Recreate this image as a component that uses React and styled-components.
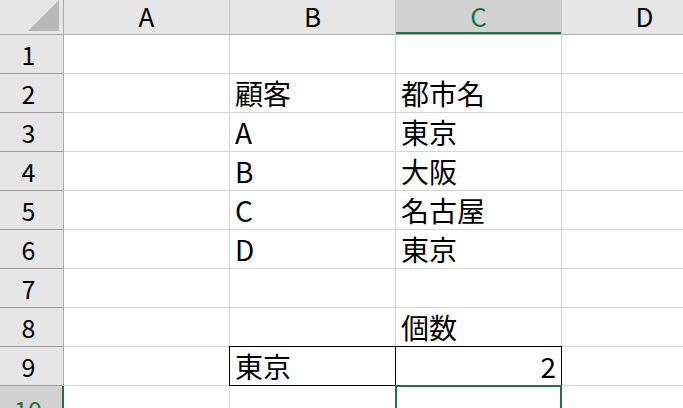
import React from "react";
import styled, { createGlobalStyle, css } from "styled-components";

const GREEN = "#217346";
const GRID = "#d4d4d4";
const HEAD_LINE = "#ababab";
const HEAD_BG = "#e6e6e6";
const HEAD_SEL = "#d2d2d2";
const FONT = `"Noto Sans CJK JP", "Noto Sans", sans-serif`;

const Global = createGlobalStyle`
  html, body { margin: 0; padding: 0; background: #fff; overflow: hidden; }
  body { font-family: ${FONT}; }
`;

const Sheet = styled.div`
  display: grid;
  grid-template-columns: 64px repeat(4, 166px);
  grid-template-rows: 35px repeat(10, 39px);
  width: 683px;
  height: 408px;
  overflow: hidden;
  font-family: ${FONT};
`;

const Corner = styled.div`
  position: relative;
  background: ${HEAD_BG};
  border-right: 1px solid ${HEAD_LINE};
  border-bottom: 1px solid ${HEAD_LINE};
  box-sizing: border-box;
  &::after {
    content: "";
    position: absolute;
    right: 4px;
    bottom: 3px;
    width: 31px;
    height: 31px;
    background: #b8b8b8;
    clip-path: polygon(100% 0, 100% 100%, 0 100%);
  }
`;

const ColHead = styled.div`
  box-sizing: border-box;
  display: flex;
  align-items: center;
  justify-content: center;
  padding-bottom: 2px;
  background: ${(p) => (p.$sel ? HEAD_SEL : HEAD_BG)};
  color: ${(p) => (p.$sel ? GREEN : "#000")};
  border-right: 1px solid #c8c8c8;
  border-bottom: 1px solid ${HEAD_LINE};
  font-size: 26px;
  line-height: 30px;
  ${(p) =>
    p.$sel &&
    css`
      box-shadow: inset 0 -2px 0 ${GREEN};
    `}
`;

const RowHead = styled.div`
  box-sizing: border-box;
  display: flex;
  align-items: center;
  justify-content: center;
  padding-right: 6px;
  background: ${(p) => (p.$sel ? HEAD_SEL : HEAD_BG)};
  color: ${(p) => (p.$sel ? GREEN : "#000")};
  border-right: 1px solid ${HEAD_LINE};
  border-bottom: 1px solid #9e9e9e;
  font-size: 25px;
  line-height: 38px;
  ${(p) =>
    p.$sel &&
    css`
      border-right: 2px solid ${GREEN};
      align-items: flex-start;
      padding-top: 4px;
    `}
`;

const Cell = styled.div`
  position: relative;
  box-sizing: border-box;
  display: flex;
  align-items: flex-end;
  justify-content: ${(p) => (p.$right ? "flex-end" : "flex-start")};
  padding: 0 5px 0 5px;
  border-right: 1px solid ${GRID};
  border-bottom: 1px solid ${GRID};
  font-size: 28px;
  line-height: 38px;
  color: #000;
  white-space: nowrap;
  ${(p) =>
    p.$boxed &&
    css`
      border-right-color: #000;
      border-bottom-color: #000;
      box-shadow: 0 -1px 0 #000, -1px 0 0 #000, -1px -1px 0 #000;
    `}
  ${(p) =>
    p.$active &&
    css`
      &::after {
        content: "";
        position: absolute;
        left: -1px;
        top: -1px;
        right: -1px;
        bottom: -1px;
        border: 2px solid ${GREEN};
        pointer-events: none;
      }
    `}
`;

const COLS = ["A", "B", "C", "D"];
const DATA = {
  2: { B: "顧客", C: "都市名" },
  3: { B: "A", C: "東京" },
  4: { B: "B", C: "大阪" },
  5: { B: "C", C: "名古屋" },
  6: { B: "D", C: "東京" },
  8: { C: "個数" },
  9: { B: "東京", C: "2" },
};
const RIGHT = { "9C": true };
const BOXED = { "9B": true, "9C": true };
const ACTIVE = { col: "C", row: 10 };

export default function App() {
  const rows = Array.from({ length: 10 }, (_, i) => i + 1);
  return (
    <>
      <Global />
      <Sheet>
        <Corner />
        {COLS.map((c) => (
          <ColHead key={c} $sel={c === ACTIVE.col}>
            {c}
          </ColHead>
        ))}
        {rows.map((r) => (
          <React.Fragment key={r}>
            <RowHead $sel={r === ACTIVE.row}>{r}</RowHead>
            {COLS.map((c) => {
              const key = `${r}${c}`;
              return (
                <Cell
                  key={c}
                  $right={RIGHT[key]}
                  $boxed={BOXED[key]}
                  $active={r === ACTIVE.row && c === ACTIVE.col}
                >
                  {DATA[r]?.[c] ?? ""}
                </Cell>
              );
            })}
          </React.Fragment>
        ))}
      </Sheet>
    </>
  );
}
